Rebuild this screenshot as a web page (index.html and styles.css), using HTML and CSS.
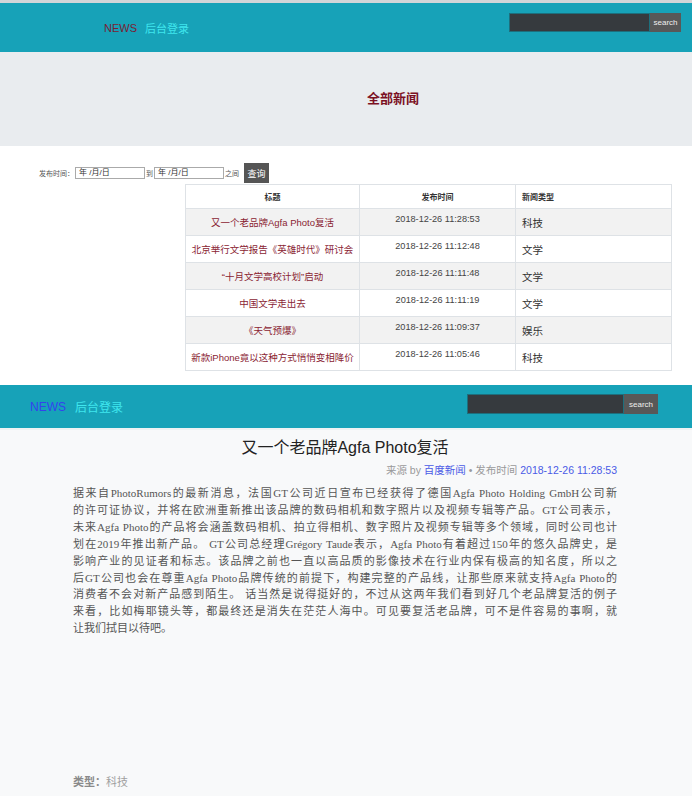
FILE: index.html
```html
<!DOCTYPE html>
<html lang="zh-CN">
<head>
<meta charset="utf-8">
<title>全部新闻</title>
<link rel="stylesheet" href="styles.css">
</head>
<body>
<header class="topbar bar1">
  <nav class="brand">
    <a class="news">NEWS</a>
    <a class="admin">后台登录</a>
  </nav>
  <div class="search">
    <span class="search-input"></span>
    <span class="search-btn">search</span>
  </div>
</header>

<section class="jumbo">
  <h1>全部新闻</h1>
</section>

<section class="list">
  <div class="filter">
    <span class="f-label">发布时间：</span>
    <span class="date">年 /月/日</span>
    <span class="f-to">到</span>
    <span class="date">年 /月/日</span>
    <span class="f-between">之间</span>
    <span class="f-btn">查询</span>
  </div>
  <table class="news-table">
    <thead>
      <tr><th class="c-title">标题</th><th class="c-time">发布时间</th><th class="c-type">新闻类型</th></tr>
    </thead>
    <tbody>
      <tr><td class="c-title">又一个老品牌Agfa Photo复活</td><td class="c-time">2018-12-26 11:28:53</td><td class="c-type">科技</td></tr>
      <tr><td class="c-title">北京举行文学报告《英雄时代》研讨会</td><td class="c-time">2018-12-26 11:12:48</td><td class="c-type">文学</td></tr>
      <tr><td class="c-title">“十月文学高校计划”启动</td><td class="c-time">2018-12-26 11:11:48</td><td class="c-type">文学</td></tr>
      <tr><td class="c-title">中国文学走出去</td><td class="c-time">2018-12-26 11:11:19</td><td class="c-type">文学</td></tr>
      <tr><td class="c-title">《天气预爆》</td><td class="c-time">2018-12-26 11:09:37</td><td class="c-type">娱乐</td></tr>
      <tr><td class="c-title">新款iPhone竟以这种方式悄悄变相降价</td><td class="c-time">2018-12-26 11:05:46</td><td class="c-type">科技</td></tr>
    </tbody>
  </table>
</section>

<header class="topbar bar2">
  <nav class="brand">
    <a class="news">NEWS</a>
    <a class="admin">后台登录</a>
  </nav>
  <div class="search">
    <span class="search-input"></span>
    <span class="search-btn">search</span>
  </div>
</header>

<main class="article">
  <h2 class="a-title">又一个老品牌Agfa Photo复活</h2>
  <p class="a-meta">来源 by <a>百度新闻</a> • 发布时间 <a>2018-12-26 11:28:53</a></p>
  <p class="a-body">
    <span class="ln">据来自PhotoRumors的最新消息，法国GT公司近日宣布已经获得了德国Agfa Photo Holding GmbH公司新</span>
    <span class="ln">的许可证协议，并将在欧洲重新推出该品牌的数码相机和数字照片以及视频专辑等产品。GT公司表示，</span>
    <span class="ln">未来Agfa Photo的产品将会涵盖数码相机、拍立得相机、数字照片及视频专辑等多个领域，同时公司也计</span>
    <span class="ln">划在2019年推出新产品。 GT公司总经理Grégory Taude表示，Agfa Photo有着超过150年的悠久品牌史，是</span>
    <span class="ln">影响产业的见证者和标志。该品牌之前也一直以高品质的影像技术在行业内保有极高的知名度，所以之</span>
    <span class="ln">后GT公司也会在尊重Agfa Photo品牌传统的前提下，构建完整的产品线，让那些原来就支持Agfa Photo的</span>
    <span class="ln">消费者不会对新产品感到陌生。 话当然是说得挺好的，不过从这两年我们看到好几个老品牌复活的例子</span>
    <span class="ln">来看，比如梅耶镜头等，都最终还是消失在茫茫人海中。可见要复活老品牌，可不是件容易的事啊，就</span>
    <span class="ln end">让我们拭目以待吧。</span>
  </p>
  <p class="a-type"><b>类型：</b>科技</p>
</main>
</body>
</html>
```

FILE: styles.css
```css
html, body {
  margin: 0;
  padding: 0;
}
body {
  font-family: "Liberation Sans", "Noto Sans CJK SC", sans-serif;
  background: #fff;
  border-top: 3px solid #d2d5d8;
  color: #333;
}

/* top bars */
.topbar {
  display: flex;
  align-items: center;
  background: #17a2b8;
  box-sizing: border-box;
}
.bar1 {
  height: 49px;
  padding: 0 11px 0 104px;
}
.bar2 {
  height: 50px;
  padding: 0 34px 0 30px;
  border-top: 5px solid #fff;
  border-bottom: 2px solid #eef2f3;
}
.brand {
  display: flex;
  align-items: center;
}
.bar1 .brand { gap: 8px; font-size: 11px; }
.bar2 .brand { gap: 9px; font-size: 12px; }
.bar1 .news { color: #7a1d33; }
.bar2 .news { color: #3442ee; }
.admin { color: #3fe6ee; }

.search {
  margin-left: auto;
  align-self: flex-start;
  display: flex;
}
.bar1 .search { margin-top: 10px; }
.bar2 .search { margin-top: 9px; }
.search-input {
  display: block;
  box-sizing: border-box;
  background: #363a3e;
  border: 1px solid #1d6f7d;
}
.bar1 .search-input { width: 141px; height: 19px; }
.bar2 .search-input { width: 157px; height: 20px; }
.search-btn {
  display: flex;
  align-items: center;
  justify-content: center;
  background: #585858;
  color: #eee;
  font-size: 8px;
}
.bar1 .search-btn { width: 31px; height: 19px; }
.bar2 .search-btn { width: 34px; height: 20px; }

/* jumbotron */
.jumbo {
  height: 94px;
  background: #e9ecef;
  display: flex;
  align-items: center;
  justify-content: center;
  padding-left: 94px;
  padding-bottom: 3px;
  box-sizing: border-box;
}
.jumbo h1 {
  margin: 0;
  font-size: 13px;
  font-weight: bold;
  color: #7b1023;
}

/* list */
.list {
  padding: 17px 0 9px;
}
.filter {
  display: flex;
  align-items: center;
  height: 20px;
  padding-left: 39px;
  font-size: 7px;
  color: #555;
}
.f-label { width: 36px; }
.date {
  box-sizing: border-box;
  width: 70px;
  height: 12px;
  border: 1px solid #aaa;
  background: #fff;
  font-size: 8px;
  line-height: 10px;
  padding-left: 3px;
  color: #333;
}
.f-to { width: 9px; text-align: center; }
.f-between { margin-left: 1px; width: 14px; }
.f-btn {
  margin-left: 5px;
  width: 25px;
  height: 20px;
  background: #555;
  color: #fff;
  font-size: 9px;
  display: flex;
  align-items: center;
  justify-content: center;
}

.news-table {
  margin: 1px 0 0 185px;
  width: 487px;
  border-collapse: collapse;
  table-layout: fixed;
}
.news-table th,
.news-table td {
  border: 1px solid #dee2e6;
  padding: 0;
  white-space: nowrap;
}
.news-table th {
  height: 23px;
  font-size: 8px;
  font-weight: bold;
  color: #333;
}
.news-table td {
  height: 26px;
}
.news-table tbody tr:nth-child(odd) td {
  background: #f2f2f2;
}
.c-title { width: 173px; text-align: center; }
.c-time { width: 155px; text-align: center; }
.c-type { text-align: left; padding-left: 6px !important; }
td.c-title {
  font-size: 9.5px;
  color: #8a2433;
}
td.c-time {
  font-size: 9.2px;
  color: #444;
  vertical-align: top;
  padding-top: 5px !important;
  box-sizing: border-box;
}
td.c-type {
  font-size: 10.5px;
  color: #333;
}

/* article */
.article {
  background: #f8f9fa;
  padding: 8px 75px 30px 73px;
}
.a-title {
  margin: 0;
  text-align: center;
  font-size: 16px;
  line-height: 20px;
  font-weight: normal;
  color: #222;
}
.a-meta {
  margin: 5px 0 0;
  text-align: right;
  font-size: 10.5px;
  line-height: 14px;
  color: #9a9a9a;
}
.a-meta a { color: #4a5be6; }
.a-body {
  margin: 8px 0 0;
  font-family: "Liberation Serif", "Noto Sans CJK SC", serif;
  font-size: 11px;
  line-height: 16.9px;
  color: #555;
}
.ln {
  display: block;
  text-align: justify;
  text-align-last: justify;
}
.ln.end { text-align-last: left; }
.a-type {
  margin: 138px 0 0;
  font-size: 11px;
  line-height: 14px;
  color: #a0a0a0;
}
.a-type b { color: #8a8a8a; }
```
